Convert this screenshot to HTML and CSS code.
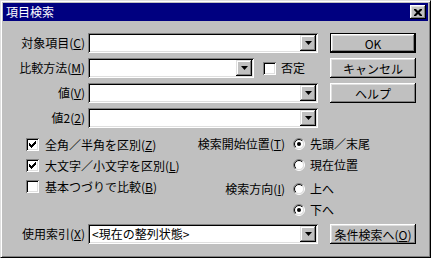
FILE: index.html
```html
<!DOCTYPE html>
<html lang="ja">
<head>
    <meta charset="UTF-8">
    <title>項目検索</title>
    <link rel="stylesheet" href="styles.css">
</head>
<body>
    <svg class="defs" width="0" height="0">
        <defs>
            <linearGradient id="ring-out" x1="0" y1="0" x2="1" y2="1">
                <stop offset="0.5" stop-color="#808080"/>
                <stop offset="0.5" stop-color="#ffffff"/>
            </linearGradient>
            <linearGradient id="ring-in" x1="0" y1="0" x2="1" y2="1">
                <stop offset="0.5" stop-color="#000000"/>
                <stop offset="0.5" stop-color="#dfdfdf"/>
            </linearGradient>
        </defs>
    </svg>

    <div class="window">
        <div class="titlebar">
            <span class="title">項目検索</span>
            <button class="close">
                <svg width="8" height="7" viewBox="0 0 8 7"><path d="M0 0h2l2 2 2-2h2v1l-2.5 2.5L8 6v1H6L4 5 2 7H0V6l2.5-2.5L0 1z" fill="#000"/></svg>
            </button>
        </div>

        <div class="content">
            <div class="fields">
                <label class="label">対象項目(<u>C</u>)</label>
                <div class="combo"><span class="combo-value"></span><span class="arrow"><svg width="7" height="4" viewBox="0 0 7 4"><path d="M0 0h7L3.5 4z" fill="#000"/></svg></span></div>
                <button class="btn default">OK</button>

                <label class="label">比較方法(<u>M</u>)</label>
                <div class="field-row">
                    <div class="combo short"><span class="combo-value"></span><span class="arrow"><svg width="7" height="4" viewBox="0 0 7 4"><path d="M0 0h7L3.5 4z" fill="#000"/></svg></span></div>
                    <span class="check-item"><span class="box"></span><span>否定</span></span>
                </div>
                <button class="btn">キャンセル</button>

                <label class="label">値(<u>V</u>)</label>
                <div class="combo"><span class="combo-value"></span><span class="arrow"><svg width="7" height="4" viewBox="0 0 7 4"><path d="M0 0h7L3.5 4z" fill="#000"/></svg></span></div>
                <button class="btn">ヘルプ</button>

                <label class="label">値2(<u>2</u>)</label>
                <div class="combo"><span class="combo-value"></span><span class="arrow"><svg width="7" height="4" viewBox="0 0 7 4"><path d="M0 0h7L3.5 4z" fill="#000"/></svg></span></div>
            </div>

            <div class="options">
                <div class="checks">
                    <div class="check-row"><span class="box checked"><svg width="7" height="7" viewBox="0 0 7 7"><path d="M0 2h1v1h1v1h1V3h1V2h1V1h1V0h1v3H6v1H5v1H4v1H3v1H2V6H1V5H0z" fill="#000"/></svg></span><span>全角／半角を区別(<u>Z</u>)</span></div>
                    <div class="check-row"><span class="box checked"><svg width="7" height="7" viewBox="0 0 7 7"><path d="M0 2h1v1h1v1h1V3h1V2h1V1h1V0h1v3H6v1H5v1H4v1H3v1H2V6H1V5H0z" fill="#000"/></svg></span><span>大文字／小文字を区別(<u>L</u>)</span></div>
                    <div class="check-row"><span class="box"></span><span>基本つづりで比較(<u>B</u>)</span></div>
                </div>

                <div class="radios">
                    <div class="radio-group">
                        <span class="label">検索開始位置(<u>T</u>)</span>
                        <div class="radio-row"><svg class="radio" width="12" height="12" viewBox="0 0 12 12"><circle cx="6" cy="6" r="5.5" fill="none" stroke="url(#ring-out)"/><circle cx="6" cy="6" r="4.5" fill="#fff" stroke="url(#ring-in)"/><circle cx="6" cy="6" r="2" fill="#000"/></svg><span>先頭／末尾</span></div>
                        <span></span>
                        <div class="radio-row"><svg class="radio" width="12" height="12" viewBox="0 0 12 12"><circle cx="6" cy="6" r="5.5" fill="none" stroke="url(#ring-out)"/><circle cx="6" cy="6" r="4.5" fill="#fff" stroke="url(#ring-in)"/></svg><span>現在位置</span></div>
                    </div>
                    <div class="radio-group">
                        <span class="label">検索方向(<u>I</u>)</span>
                        <div class="radio-row"><svg class="radio" width="12" height="12" viewBox="0 0 12 12"><circle cx="6" cy="6" r="5.5" fill="none" stroke="url(#ring-out)"/><circle cx="6" cy="6" r="4.5" fill="#fff" stroke="url(#ring-in)"/></svg><span>上へ</span></div>
                        <span></span>
                        <div class="radio-row"><svg class="radio" width="12" height="12" viewBox="0 0 12 12"><circle cx="6" cy="6" r="5.5" fill="none" stroke="url(#ring-out)"/><circle cx="6" cy="6" r="4.5" fill="#fff" stroke="url(#ring-in)"/><circle cx="6" cy="6" r="2" fill="#000"/></svg><span>下へ</span></div>
                    </div>
                </div>
            </div>

            <div class="fields bottom">
                <label class="label">使用索引(<u>X</u>)</label>
                <div class="combo"><span class="combo-value">&lt;現在の整列状態&gt;</span><span class="arrow"><svg width="7" height="4" viewBox="0 0 7 4"><path d="M0 0h7L3.5 4z" fill="#000"/></svg></span></div>
                <button class="btn">条件検索へ(<u>O</u>)</button>
            </div>
        </div>
    </div>
</body>
</html>
```

FILE: styles.css
```css
body {
    margin: 0;
    background: #c0c0c0;
    font-family: "Noto Sans CJK JP", "Noto Sans", sans-serif;
    font-size: 12px;
    color: #000;
}

.defs {
    position: absolute;
}

.window {
    width: 431px;
    height: 258px;
    box-sizing: border-box;
    background: #c0c0c0;
    border: 1px solid;
    border-color: #dfdfdf #000 #000 #dfdfdf;
    box-shadow: inset 1px 1px #fff, inset -1px -1px #808080;
    padding: 2px;
}

.titlebar {
    height: 18px;
    background: #000080;
    color: #fff;
    display: flex;
    align-items: center;
    justify-content: space-between;
    padding: 0 2px 0 3px;
}

.title {
    font-size: 12px;
    line-height: 18px;
}

.close {
    width: 16px;
    height: 14px;
    padding: 0;
    border: none;
    background: #c0c0c0;
    box-shadow: inset -1px -1px #000, inset 1px 1px #fff, inset -2px -2px #808080, inset 2px 2px #dfdfdf;
    display: flex;
    align-items: center;
    justify-content: center;
}

.content {
    padding: 12px 0 0 9px;
}

.fields {
    display: grid;
    grid-template-columns: 73px 230px 95px;
    grid-auto-rows: 20px;
    column-gap: 3px;
    row-gap: 5px;
    align-items: center;
}

.label {
    text-align: right;
    white-space: nowrap;
    line-height: 20px;
}

.combo {
    box-sizing: border-box;
    height: 20px;
    background: #fff;
    box-shadow: inset 1px 1px #808080, inset -1px -1px #fff, inset 2px 2px #000, inset -2px -2px #dfdfdf;
    display: flex;
    align-items: center;
    padding: 2px;
}

.combo.short {
    width: 166px;
}

.combo-value {
    flex: 1;
    padding-left: 2px;
    line-height: 16px;
    white-space: nowrap;
}

.arrow {
    width: 16px;
    height: 16px;
    background: #c0c0c0;
    box-shadow: inset -1px -1px #000, inset 1px 1px #dfdfdf, inset -2px -2px #808080, inset 2px 2px #fff;
    display: flex;
    align-items: center;
    justify-content: center;
}

.field-row {
    display: flex;
    align-items: center;
}

.check-item {
    display: flex;
    align-items: center;
    gap: 5px;
    margin-left: 9px;
    line-height: 20px;
}

.btn {
    width: 86px;
    height: 20px;
    margin-left: 9px;
    padding: 0;
    border: none;
    background: #c0c0c0;
    font-family: inherit;
    font-size: 12px;
    color: #000;
    box-shadow: inset -1px -1px #000, inset 1px 1px #fff, inset -2px -2px #808080, inset 2px 2px #dfdfdf;
}

.btn.default {
    box-shadow: inset 0 0 0 1px #000, inset -2px -2px #000, inset 2px 2px #fff, inset -3px -3px #808080, inset 3px 3px #dfdfdf;
}

.box {
    width: 13px;
    height: 13px;
    box-sizing: border-box;
    background: #fff;
    box-shadow: inset 1px 1px #808080, inset -1px -1px #fff, inset 2px 2px #000, inset -2px -2px #dfdfdf;
    display: flex;
    align-items: center;
    justify-content: center;
    flex: none;
}

.options {
    display: flex;
    margin-top: 5px;
}

.checks {
    width: 156px;
    padding: 1px 0 0 14px;
}

.check-row {
    height: 21px;
    display: flex;
    align-items: center;
    gap: 6px;
    white-space: nowrap;
}

.radios {
    display: flex;
    flex-direction: column;
    gap: 3px;
}

.radio-group {
    display: grid;
    grid-template-columns: 103px auto;
    grid-auto-rows: 21px;
    align-items: center;
}

.radio-group .label {
    line-height: 21px;
}

.radio-row {
    display: flex;
    align-items: center;
    gap: 5px;
    padding-left: 8px;
    white-space: nowrap;
}

.radio {
    flex: none;
}

.bottom {
    margin-top: 4px;
}
```
